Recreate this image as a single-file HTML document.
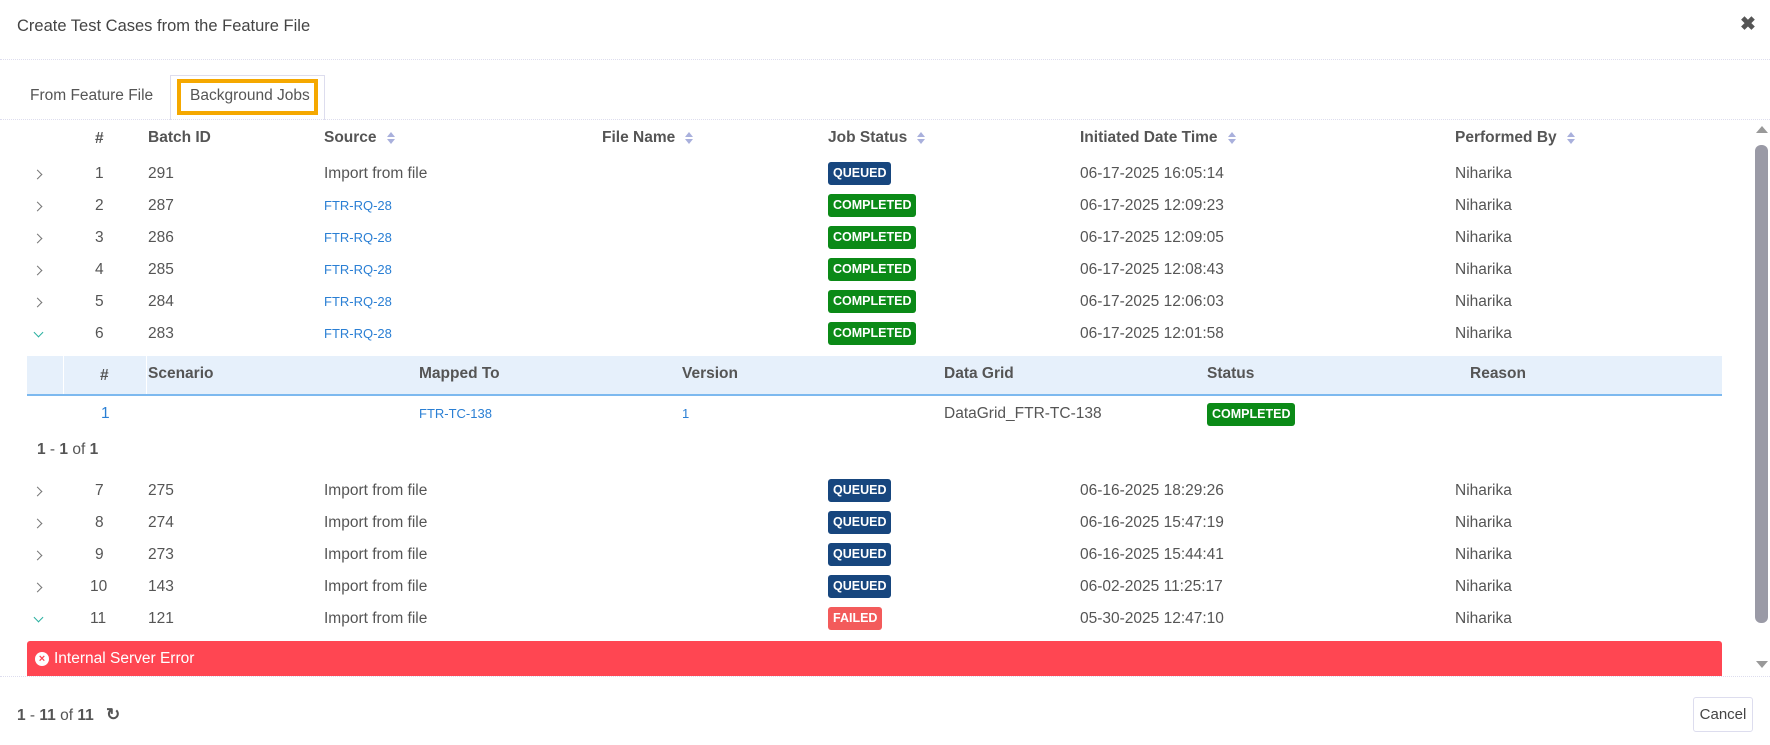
<!DOCTYPE html>
<html><head><meta charset="utf-8"><style>
*{margin:0;padding:0;box-sizing:border-box}
body{width:1770px;height:745px;background:#fff;font-family:"Liberation Sans",sans-serif;color:#555;position:relative;overflow:hidden;font-size:15.5px}
.a{position:absolute;white-space:nowrap;line-height:20px}
.h{font-weight:bold;color:#555}
.lnk{color:#2a7fd4;font-size:13px}
.b{position:absolute;height:23px;line-height:23px;color:#fff;font-weight:bold;font-size:12.5px;padding:0 5px;border-radius:3px}
.q{background:#17467e}.c{background:#0b8a17}.f{background:#f35b5b}
.chev{position:absolute;width:7px;height:7px;border-right:1.5px solid #777;border-top:1.5px solid #777;transform:rotate(45deg)}
.chev.d{transform:rotate(135deg);border-color:#2ab0a0}
.srt{display:inline-block;margin-left:10px;vertical-align:middle;width:8px;height:12px;position:relative}
.srt:before{content:"";position:absolute;top:0;left:0;border-left:4px solid transparent;border-right:4px solid transparent;border-bottom:5px solid #a9b0dc}
.srt:after{content:"";position:absolute;bottom:0;left:0;border-left:4px solid transparent;border-right:4px solid transparent;border-top:5px solid #a9b0dc}
</style></head><body>
<div class="a" style="left:17px;top:16px;font-size:16.5px;color:#444">Create Test Cases from the Feature File</div>
<div class="a" style="left:1740px;top:15px;font-size:19px;font-weight:bold;color:#555">✖</div>
<div style="position:absolute;left:0;top:59px;width:1770px;border-top:1px dotted #dde"></div>
<div class="a" style="left:30px;top:86px;color:#555">From Feature File</div>
<div style="position:absolute;left:170px;top:75px;width:155px;height:45px;border:1px solid #dde;border-bottom:none;background:#fff"></div>
<div style="position:absolute;left:177px;top:79px;width:141px;height:36px;border:4px solid #f5a800"></div>
<div class="a" style="left:190px;top:86px;color:#555">Background Jobs</div>
<div style="position:absolute;left:0;top:119px;width:1770px;border-top:1px dotted #dde"></div>

<div class="a h" style="left:95px;top:129px">#</div>
<div class="a h" style="left:148px;top:128px">Batch ID</div>
<div class="a h" style="left:324px;top:128px">Source<span class="srt"></span></div>
<div class="a h" style="left:602px;top:128px">File Name<span class="srt"></span></div>
<div class="a h" style="left:828px;top:128px">Job Status<span class="srt"></span></div>
<div class="a h" style="left:1080px;top:128px">Initiated Date Time<span class="srt"></span></div>
<div class="a h" style="left:1455px;top:128px">Performed By<span class="srt"></span></div>

<!-- rows -->
<div id="rows"></div>
<div class="chev" style="left:34px;top:171px"></div><div class="a" style="left:95px;top:164px">1</div><div class="a" style="left:148px;top:164px">291</div><div class="a" style="left:324px;top:164px">Import from file</div><div class="b q" style="left:828px;top:162px">QUEUED</div><div class="a" style="left:1080px;top:164px">06-17-2025 16:05:14</div><div class="a" style="left:1455px;top:164px">Niharika</div>
<div class="chev" style="left:34px;top:203px"></div><div class="a" style="left:95px;top:196px">2</div><div class="a" style="left:148px;top:196px">287</div><div class="a lnk" style="left:324px;top:196px">FTR-RQ-28</div><div class="b c" style="left:828px;top:194px">COMPLETED</div><div class="a" style="left:1080px;top:196px">06-17-2025 12:09:23</div><div class="a" style="left:1455px;top:196px">Niharika</div>
<div class="chev" style="left:34px;top:235px"></div><div class="a" style="left:95px;top:228px">3</div><div class="a" style="left:148px;top:228px">286</div><div class="a lnk" style="left:324px;top:228px">FTR-RQ-28</div><div class="b c" style="left:828px;top:226px">COMPLETED</div><div class="a" style="left:1080px;top:228px">06-17-2025 12:09:05</div><div class="a" style="left:1455px;top:228px">Niharika</div>
<div class="chev" style="left:34px;top:267px"></div><div class="a" style="left:95px;top:260px">4</div><div class="a" style="left:148px;top:260px">285</div><div class="a lnk" style="left:324px;top:260px">FTR-RQ-28</div><div class="b c" style="left:828px;top:258px">COMPLETED</div><div class="a" style="left:1080px;top:260px">06-17-2025 12:08:43</div><div class="a" style="left:1455px;top:260px">Niharika</div>
<div class="chev" style="left:34px;top:299px"></div><div class="a" style="left:95px;top:292px">5</div><div class="a" style="left:148px;top:292px">284</div><div class="a lnk" style="left:324px;top:292px">FTR-RQ-28</div><div class="b c" style="left:828px;top:290px">COMPLETED</div><div class="a" style="left:1080px;top:292px">06-17-2025 12:06:03</div><div class="a" style="left:1455px;top:292px">Niharika</div>
<div class="chev d" style="left:35px;top:329px"></div><div class="a" style="left:95px;top:324px">6</div><div class="a" style="left:148px;top:324px">283</div><div class="a lnk" style="left:324px;top:324px">FTR-RQ-28</div><div class="b c" style="left:828px;top:322px">COMPLETED</div><div class="a" style="left:1080px;top:324px">06-17-2025 12:01:58</div><div class="a" style="left:1455px;top:324px">Niharika</div>

<!-- subtable -->
<div style="position:absolute;left:27px;top:356px;width:1695px;height:40px;background:#e6f0fb;border-bottom:2px solid #7db9ef"></div>
<div style="position:absolute;left:63px;top:356px;width:1px;height:38px;background:#fff"></div>
<div style="position:absolute;left:146px;top:356px;width:1px;height:38px;background:#fff"></div>
<div class="a h" style="left:100px;top:366px">#</div>
<div class="a h" style="left:148px;top:364px">Scenario</div>
<div class="a h" style="left:419px;top:364px">Mapped To</div>
<div class="a h" style="left:682px;top:364px">Version</div>
<div class="a h" style="left:944px;top:364px">Data Grid</div>
<div class="a h" style="left:1207px;top:364px">Status</div>
<div class="a h" style="left:1470px;top:364px">Reason</div>
<div class="a" style="left:101px;top:404px;color:#2a7fd4">1</div>
<div class="a lnk" style="left:419px;top:404px">FTR-TC-138</div>
<div class="a lnk" style="left:682px;top:404px">1</div>
<div class="a" style="left:944px;top:404px">DataGrid_FTR-TC-138</div>
<div class="b c" style="left:1207px;top:403px">COMPLETED</div>
<div class="a" style="left:37px;top:440px"><b>1</b> - <b>1</b> of <b>1</b></div>

<div class="chev" style="left:34px;top:488px"></div><div class="a" style="left:95px;top:481px">7</div><div class="a" style="left:148px;top:481px">275</div><div class="a" style="left:324px;top:481px">Import from file</div><div class="b q" style="left:828px;top:479px">QUEUED</div><div class="a" style="left:1080px;top:481px">06-16-2025 18:29:26</div><div class="a" style="left:1455px;top:481px">Niharika</div>
<div class="chev" style="left:34px;top:520px"></div><div class="a" style="left:95px;top:513px">8</div><div class="a" style="left:148px;top:513px">274</div><div class="a" style="left:324px;top:513px">Import from file</div><div class="b q" style="left:828px;top:511px">QUEUED</div><div class="a" style="left:1080px;top:513px">06-16-2025 15:47:19</div><div class="a" style="left:1455px;top:513px">Niharika</div>
<div class="chev" style="left:34px;top:552px"></div><div class="a" style="left:95px;top:545px">9</div><div class="a" style="left:148px;top:545px">273</div><div class="a" style="left:324px;top:545px">Import from file</div><div class="b q" style="left:828px;top:543px">QUEUED</div><div class="a" style="left:1080px;top:545px">06-16-2025 15:44:41</div><div class="a" style="left:1455px;top:545px">Niharika</div>
<div class="chev" style="left:34px;top:584px"></div><div class="a" style="left:90px;top:577px">10</div><div class="a" style="left:148px;top:577px">143</div><div class="a" style="left:324px;top:577px">Import from file</div><div class="b q" style="left:828px;top:575px">QUEUED</div><div class="a" style="left:1080px;top:577px">06-02-2025 11:25:17</div><div class="a" style="left:1455px;top:577px">Niharika</div>
<div class="chev d" style="left:35px;top:614px"></div><div class="a" style="left:90px;top:609px">11</div><div class="a" style="left:148px;top:609px">121</div><div class="a" style="left:324px;top:609px">Import from file</div><div class="b f" style="left:828px;top:607px">FAILED</div><div class="a" style="left:1080px;top:609px">05-30-2025 12:47:10</div><div class="a" style="left:1455px;top:609px">Niharika</div>

<div style="position:absolute;left:27px;top:641px;width:1695px;height:35px;background:#ff4652;border-radius:3px 3px 0 0"></div>
<div style="position:absolute;left:35px;top:652px;width:14px;height:14px;border-radius:50%;background:#fff;color:#ff4652;font-size:11px;line-height:14px;text-align:center;font-weight:bold">×</div>
<div class="a" style="left:54px;top:649px;color:#fff">Internal Server Error</div>
<div style="position:absolute;left:0;top:676px;width:1770px;border-top:1px dotted #dde"></div>

<!-- scrollbar -->
<div style="position:absolute;left:1756px;top:126px;border-left:6px solid transparent;border-right:6px solid transparent;border-bottom:7px solid #999"></div>
<div style="position:absolute;left:1755px;top:145px;width:13px;height:478px;background:#9a9aa6;border-radius:6px"></div>
<div style="position:absolute;left:1756px;top:661px;border-left:6px solid transparent;border-right:6px solid transparent;border-top:7px solid #999"></div>

<div class="a" style="left:17px;top:705px;color:#555"><b>1</b> - <b>11</b> of <b>11</b> <span style="margin-left:8px;font-weight:bold;font-size:17px">↻</span></div>
<div style="position:absolute;left:1693px;top:697px;width:60px;height:35px;border:1px solid #dde;border-radius:3px;text-align:center;line-height:33px;font-size:15px;color:#444">Cancel</div>
</body></html>
